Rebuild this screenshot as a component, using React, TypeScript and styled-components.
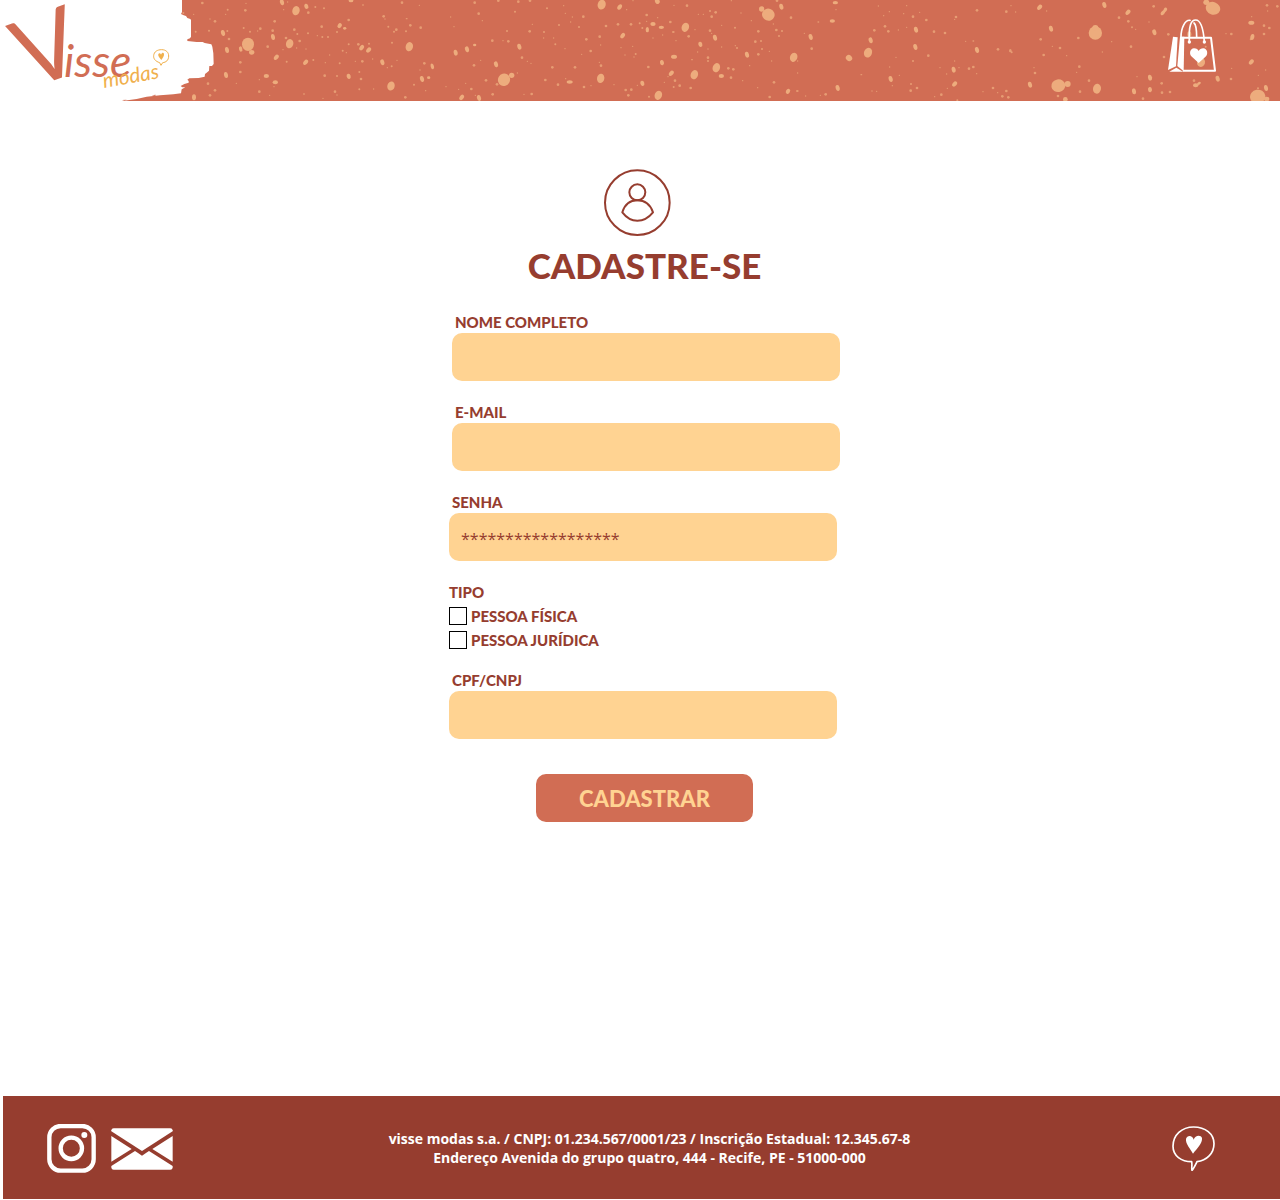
import React from "react";
import styled, { createGlobalStyle } from "styled-components";

const color = {
  coral: "#d16d54",
  speck: "#edac7d",
  brick: "#963d2f",
  cream: "#ffd392",
  gold: "#f0b04c",
  white: "#ffffff",
};

const GlobalStyle = createGlobalStyle`
  *, *::before, *::after { box-sizing: border-box; }
  body {
    margin: 0;
    background: ${color.white};
    color: ${color.brick};
    font-family: Lato, "Open Sans", sans-serif;
  }
`;

const Page = styled.div`
  display: flex;
  flex-direction: column;
  min-height: 100vh;
  padding-bottom: 1px;
`;

const Header = styled.header`
  position: relative;
  display: flex;
  justify-content: space-between;
  align-items: flex-start;
  padding-right: 64px;
  overflow: hidden;
  background: ${color.coral};
`;

const Speckles = styled.svg`
  position: absolute;
  inset: 0;
  width: 100%;
  height: 100%;
  fill: ${color.speck};
`;

const LogoLink = styled.a`
  position: relative;
  display: block;
  line-height: 0;
`;

const BagLink = styled.a`
  position: relative;
  display: block;
  margin-top: 19px;
  line-height: 0;
`;

const Main = styled.main`
  flex: 1;
  display: flex;
  flex-direction: column;
  align-items: center;
  padding: 68px 0 48px 9px;
`;

const Avatar = styled.svg`
  margin-right: 14px;
  fill: none;
  stroke: ${color.brick};
  stroke-width: 6;
`;

const Title = styled.h1`
  margin: 5px 0 22px;
  font-size: 35px;
  line-height: 48px;
  font-weight: 900;
  text-transform: uppercase;
`;

const Form = styled.form`
  display: flex;
  flex-direction: column;
  gap: 20px;
  width: 391px;
  max-width: 100%;
`;

const Field = styled.div<{ $side: "start" | "end" }>`
  display: flex;
  flex-direction: column;
  align-self: flex-${(p) => p.$side};
  width: 388px;
  max-width: 100%;
`;

const Label = styled.label`
  padding-left: 3px;
  font-size: 15px;
  line-height: 22px;
  font-weight: 900;
  text-transform: uppercase;
`;

const TextBox = styled.input`
  width: 100%;
  height: 48px;
  padding: 4px 12px 0;
  border: 0;
  border-radius: 10px;
  background: ${color.cream};
  color: ${color.brick};
  font-family: "Open Sans", sans-serif;
  font-size: 16px;
`;

const Group = styled.fieldset`
  display: flex;
  flex-direction: column;
  min-width: 0;
  margin: 0;
  padding: 0;
  border: 0;
`;

const Legend = styled.legend`
  padding: 0;
  font-size: 15px;
  line-height: 22px;
  font-weight: 900;
  text-transform: uppercase;
`;

const Options = styled.div`
  display: flex;
  flex-direction: column;
  gap: 6px;
  padding-top: 4px;
`;

const Option = styled.label`
  display: flex;
  align-items: center;
  gap: 4px;
  font-size: 15px;
  line-height: 18px;
  font-weight: 900;
  text-transform: uppercase;
`;

const Tick = styled.input`
  appearance: none;
  width: 18px;
  height: 18px;
  margin: 0;
  border: 1px solid #000;
  background: ${color.white};
  &:checked { background: ${color.coral}; }
`;

const Submit = styled.button`
  align-self: center;
  width: 217px;
  height: 48px;
  margin-top: 15px;
  padding: 0;
  border: 0;
  border-radius: 10px;
  background: ${color.coral};
  color: ${color.cream};
  font-family: inherit;
  font-size: 22px;
  font-weight: 900;
  text-transform: uppercase;
  cursor: pointer;
`;

const Footer = styled.footer`
  display: grid;
  grid-template-columns: 1fr auto 1fr;
  align-items: center;
  min-height: 103px;
  margin-left: 3px;
  background: ${color.brick};
  color: ${color.white};
`;

const Social = styled.nav`
  display: flex;
  align-items: center;
  gap: 15px;
  padding: 2px 0 0 44px;
  line-height: 0;
`;

const Company = styled.p`
  margin: 0;
  padding-left: 16px;
  font-family: "Open Sans", sans-serif;
  font-size: 14px;
  line-height: 19px;
  font-weight: 700;
  text-align: center;
`;

const ChatLink = styled.a`
  justify-self: end;
  padding: 2px 65px 0 0;
  line-height: 0;
`;

/* Each speck is x, y, horizontal radius, vertical radius, tilt, in banner units of a third of a pixel. */
type Speck = [number, number, number, number?, number?];

const SPECKS: { origin: number; marks: Speck[] }[] = [
  { origin: 0, marks: [[550, 39, 3], [587, 95, 3], [582, 292, 6, 9], [581, 43, 2]] },
  {
    origin: 600,
    marks: [
      [144, 133, 18, 20], [155, 157, 8, 7], [288, 32, 11, 14, 15], [269, 131, 11, 14, 15], [628, 140, 11, 14, 15],
      [573, 258, 11, 14, 15], [912, 239, 18, 19, 30], [935, 226, 8, 8],
      [246, 7, 6, 9, -15], [319, 19, 6, 8, -20], [69, 99, 6, 9, -15], [81, 150, 6, 9, -10], [122, 147, 5, 8, -15],
      [219, 111, 6, 9, -10], [229, 172, 6, 9, 40], [317, 187, 6, 9, 40], [199, 228, 8, 6], [226, 247, 8, 6],
      [78, 225, 6, 9, -10], [419, 77, 6, 8, 35], [485, 143, 6, 9, 35], [506, 150, 6, 9, 40], [446, 229, 6, 8, -15],
      [547, 187, 6, 9, -15], [697, 199, 5, 9, -15], [666, 237, 6, 9, -15], [767, 158, 6, 9, -10], [801, 148, 6, 9, -15],
      [958, 140, 6, 9, -15], [888, 193, 6, 9, -15], [785, 292, 6, 9, 35], [837, 294, 6, 9, -15],
      [453, 2, 7, 5], [7, 9, 4], [83, 29, 3], [45, 64, 4], [27, 92, 3], [82, 93, 3], [87, 117, 4], [77, 43, 2], [30, 57, 2],
      [136, 31, 4], [138, 10, 2], [263, 6, 2], [346, 21, 3], [372, 25, 3], [325, 38, 4], [251, 29, 2], [224, 64, 4],
      [131, 84, 3], [150, 95, 3], [181, 86, 4], [173, 93, 2], [218, 92, 4], [283, 89, 4], [292, 102, 3], [324, 100, 3],
      [258, 114, 4], [299, 123, 4], [203, 140, 4], [249, 149, 2], [290, 144, 2], [318, 147, 2], [352, 107, 2],
      [367, 111, 3], [384, 111, 3], [365, 80, 4], [411, 96, 3], [434, 85, 5, 4], [446, 60, 4], [489, 15, 3, 2],
      [551, 49, 4], [555, 57, 2], [606, 8, 4], [620, 56, 3, 2], [658, 16, 2], [565, 80, 3], [589, 89, 4], [582, 95, 3],
      [618, 94, 3], [631, 76, 4], [662, 83, 4], [576, 128, 3], [507, 131, 3], [475, 133, 4], [446, 133, 3], [428, 152, 3],
      [439, 158, 2], [389, 165, 2], [376, 188, 2], [340, 180, 3], [260, 185, 3], [121, 187, 4], [121, 216, 4],
      [24, 251, 4], [45, 271, 4], [30, 286, 4], [109, 250, 2], [178, 239, 2], [178, 275, 4], [209, 286, 2], [222, 260, 2],
      [312, 282, 3, 2], [374, 227, 4], [411, 228, 3], [419, 190, 3], [466, 184, 2], [487, 184, 4], [518, 177, 2],
      [591, 181, 2], [562, 203, 2], [575, 199, 3], [478, 216, 3], [483, 237, 4], [478, 268, 3], [405, 275, 4], [411, 285, 2],
      [369, 295, 2], [521, 267, 2], [616, 292, 4], [642, 254, 3], [686, 233, 5, 4], [660, 210, 2], [673, 190, 4],
      [677, 272, 2], [738, 260, 2], [752, 51, 2], [762, 80, 2], [824, 8, 4], [836, 41, 4], [847, 62, 2], [895, 2, 4],
      [955, 5, 4], [945, 35, 3], [990, 2, 4], [1041, 25, 3], [997, 73, 2], [989, 94, 4], [921, 93, 3], [877, 122, 4],
      [909, 122, 2], [925, 124, 4], [824, 135, 5, 4], [822, 196, 4], [842, 181, 2], [966, 173, 4], [982, 184, 2],
      [993, 190, 2], [952, 219, 2], [858, 241, 4], [891, 253, 4], [797, 250, 2], [814, 267, 4], [776, 268, 2],
      [826, 286, 2], [878, 283, 4], [972, 283, 2], [995, 282, 4], [1036, 240, 4], [1032, 96, 3], [1031, 114, 2],
    ],
  },
  {
    origin: 1650,
    marks: [
      [155, 14, 12, 15, 15], [406, 82, 11, 14, 20], [152, 235, 11, 14, 10], [433, 224, 11, 14, 20], [499, 203, 11, 14, 20],
      [325, 286, 11, 14, 20], [655, 44, 19, 18, 20], [635, 27, 8, 8], [731, 172, 11, 14, 20], [897, 174, 10, 9, 45],
      [954, 158, 12, 15, 20], [322, 4, 7, 8, -30],
      [209, 21, 6, 9, 35], [218, 107, 6, 9, 35], [309, 72, 8, 6], [334, 82, 8, 5], [292, 89, 5, 8], [372, 170, 9, 6],
      [336, 188, 6, 8, -15], [364, 220, 6, 9, 40], [277, 250, 6, 8, -15], [59, 246, 9, 5], [451, 133, 6, 8, -15],
      [495, 113, 6, 9, -15], [591, 164, 6, 9, -15], [514, 228, 8, 6], [694, 20, 6, 9, -15], [782, 111, 6, 9, -15],
      [847, 63, 8, 5], [856, 8, 8, 5], [962, 121, 6, 9, -15], [1022, 237, 6, 9, -15], [863, 264, 6, 9, -15],
      [714, 274, 6, 8, 30],
      [41, 17, 2], [46, 40, 2], [67, 51, 2], [62, 66, 2], [27, 75, 3], [100, 50, 4], [87, 81, 3], [168, 78, 4],
      [204, 73, 4], [243, 73, 4], [230, 29, 2], [249, 2, 2], [290, 45, 4], [290, 64, 2], [269, 70, 3], [277, 84, 3],
      [323, 53, 2], [361, 66, 4], [372, 16, 2], [411, 17, 4], [370, 96, 4, 3], [338, 105, 2], [309, 114, 2], [378, 122, 2],
      [416, 109, 4], [435, 89, 2], [445, 43, 2], [460, 43, 2], [480, 33, 3], [497, 37, 4], [485, 50, 4], [515, 76, 2],
      [480, 92, 4], [485, 100, 2], [544, 2, 2], [573, 39, 2], [555, 83, 3], [604, 62, 2], [625, 94, 4], [616, 125, 4],
      [633, 123, 3], [636, 147, 3], [625, 163, 4], [658, 154, 2], [665, 183, 2], [670, 72, 2], [679, 90, 4], [696, 93, 3],
      [687, 108, 3], [681, 2, 4], [723, 53, 4], [763, 100, 2], [785, 146, 4], [805, 66, 3, 2], [858, 29, 2],
      [11, 114, 2], [16, 133, 3], [45, 146, 2], [109, 118, 4], [149, 110, 4], [152, 135, 2], [122, 153, 4], [95, 163, 2],
      [213, 143, 2], [248, 139, 2], [225, 165, 2], [257, 162, 3], [252, 171, 2], [148, 187, 2], [153, 197, 4],
      [75, 202, 4], [7, 202, 4], [24, 254, 4], [47, 236, 2], [102, 261, 4], [123, 257, 2], [192, 254, 2], [227, 270, 4],
      [244, 269, 4], [235, 286, 4], [262, 256, 2], [297, 290, 3], [295, 201, 4], [354, 230, 2], [343, 247, 2],
      [375, 242, 4], [371, 261, 3], [389, 257, 4], [422, 264, 4], [426, 179, 3, 2], [443, 156, 2], [474, 147, 2],
      [474, 173, 4], [474, 183, 3], [515, 141, 2], [556, 137, 2], [561, 144, 3], [535, 205, 4], [550, 208, 4],
      [543, 233, 4], [599, 197, 2], [578, 242, 2], [623, 263, 2], [672, 247, 4], [659, 291, 4], [743, 183, 2],
      [743, 219, 2], [742, 273, 4, 3], [767, 288, 2], [811, 286, 2], [827, 283, 4], [934, 224, 3, 2], [966, 273, 2],
      [980, 274, 2], [1027, 257, 2], [1048, 226, 2], [1019, 201, 2], [1038, 172, 2], [1015, 94, 4], [1005, 79, 4],
      [973, 91, 4], [985, 18, 2], [1001, 47, 2], [1018, 35, 2], [1045, 90, 2],
    ],
  },
  {
    origin: 2700,
    marks: [
      [586, 99, 20, 20], [586, 84, 9, 9], [475, 257, 21, 19, -10], [503, 252, 9, 9], [591, 266, 12, 15, 10],
      [939, 25, 22, 19, 20], [919, 7, 9, 8], [1073, 290, 23, 21, -10], [1100, 297, 8, 7], [903, 187, 12, 14, 15],
      [868, 103, 6, 9], [48, 89, 6, 9, -15], [46, 141, 6, 9, -15], [161, 209, 6, 9, -10], [164, 252, 6, 9, 40],
      [231, 150, 6, 9, -15], [419, 22, 6, 9, 40], [453, 86, 6, 9, -15], [390, 254, 6, 9, -15], [613, 15, 6, 9, -15],
      [684, 37, 6, 9, 40], [763, 97, 6, 9, -15], [789, 38, 5, 9, 40], [796, 29, 5, 7, 30], [750, 233, 6, 9, -10],
      [750, 269, 6, 8, -10], [702, 274, 6, 9, -10], [953, 236, 6, 9, -15], [887, 256, 8, 6], [897, 250, 6, 4, -30],
      [1054, 186, 6, 9, 40], [1057, 111, 6, 9, 10], [1054, 68, 9, 6], [1098, 264, 6, 9, -10], [496, 298, 7, 7],
      [20, 17, 2], [11, 41, 2], [39, 50, 4], [59, 37, 2], [79, 60, 4], [20, 82, 2], [102, 95, 4], [135, 99, 4],
      [168, 51, 4], [164, 58, 2], [231, 31, 4], [197, 124, 2], [220, 123, 3, 2], [333, 17, 2], [319, 35, 4],
      [347, 36, 2], [440, 33, 2], [422, 118, 4], [457, 139, 2], [480, 144, 4], [431, 165, 4], [500, 167, 2],
      [535, 114, 4], [538, 200, 4], [530, 217, 2], [607, 156, 2], [635, 125, 2], [693, 140, 4], [657, 53, 4],
      [685, 64, 4], [696, 82, 3], [707, 88, 2], [747, 66, 2], [761, 19, 4], [805, 103, 4], [792, 171, 4],
      [85, 167, 4], [39, 183, 3], [33, 252, 3], [32, 272, 4], [51, 264, 4], [104, 290, 2], [124, 284, 4],
      [120, 203, 2], [140, 222, 2], [142, 265, 2], [164, 183, 2], [177, 203, 2], [207, 206, 4], [220, 201, 4],
      [230, 221, 2], [249, 275, 2], [279, 264, 4], [293, 278, 2], [307, 289, 4], [325, 292, 4], [319, 273, 4],
      [294, 148, 4], [331, 152, 4, 5], [335, 157, 3], [402, 203, 2], [405, 219, 4], [567, 242, 4], [540, 275, 4],
      [474, 288, 4], [711, 230, 2], [729, 296, 4], [785, 250, 4], [786, 278, 4], [810, 276, 4], [882, 242, 4],
      [993, 237, 4], [995, 205, 2], [978, 101, 2], [994, 102, 4], [1055, 50, 2], [1052, 118, 3], [1092, 77, 4],
      [1108, 84, 4], [1092, 102, 4], [1101, 16, 4], [1132, 19, 4], [1103, 33, 2], [1097, 210, 2], [1075, 226, 2],
      [1074, 265, 3], [917, 140, 3], [172, 301, 3],
    ],
  },
];

function Splatter() {
  return (
    <Speckles viewBox="0 0 3840 303" preserveAspectRatio="xMidYMin slice" aria-hidden="true">
      {SPECKS.map(({ origin, marks }) => (
        <g key={origin} transform={`translate(${origin} 0)`}>
          {marks.map(([x, y, rx, ry = rx, tilt = 0], i) => (
            <ellipse
              key={i}
              cx={x}
              cy={y}
              rx={rx}
              ry={ry}
              opacity={rx < 5 ? 0.75 : 1}
              transform={`rotate(${tilt} ${x} ${y})`}
            />
          ))}
        </g>
      ))}
    </Speckles>
  );
}

function Logo() {
  return (
    <svg width="214" height="101" viewBox="0 0 642 303" role="img" aria-label="Visse modas">
      <path
        fill={color.white}
        d="M0 0H546V36L543 42 551 46 558 48 562 54 571 57 573 60V110L570 115 562 118V123L590 126 608 126 614 129 634 133 637 140 640 160 641 192 636 198 628 198 627 212 620 218 615 222 614 230 596 234 568 235 562 239 566 243V248L553 252 542 258 547 262 556 262 545 268 543 280 520 283 480 286 440 290 410 297 366 303H0Z"
      />
      <path fill={color.coral} d="M455 286l12-2-1 4zM366 300l14-1-6 3z" />
      <g fontFamily="Lato, sans-serif">
        <text x="174" y="236" fill={color.coral} fontSize="284" textAnchor="middle" transform="rotate(-20 174 236)">V</text>
        <text x="192" y="232" fill={color.coral} fontSize="134" fontStyle="italic">isse</text>
        <text x="312" y="264" fill={color.gold} fontSize="62" fontStyle="italic" transform="rotate(-10 312 264)">modas</text>
      </g>
      <path
        fill="none"
        stroke={color.gold}
        strokeWidth="3"
        d="M479 188C466 184 460 176 461 167C462 155 472 149 485 149C498 149 506 157 506 168C506 181 498 187 488 188L483 196Z"
      />
      <path fill={color.gold} d="M484 180C478 173 473 167 475 162C478 158 482 160 483 164C486 157 491 157 492 162C493 168 488 174 484 180Z" />
    </svg>
  );
}

function BagIcon() {
  return (
    <svg width="48" height="53" viewBox="54 43 144 159" aria-hidden="true">
      <g fill="none" stroke={color.white} strokeWidth="5" strokeLinecap="round">
        <path d="M93 98C93 68 106 45 120 47" />
        <path d="M118 111C116 62 123 46 137 46C152 46 160 72 163 111" />
        <path d="M132 55C138 60 140 78 140 97" />
      </g>
      <path fill="none" stroke={color.white} strokeWidth="6" strokeLinejoin="round" d="M94 99H183L195 198H98" />
      <g fill={color.white}>
        <path d="M69 96L83 98 78 185 54 196Z" />
        <path d="M90 96H103L101 198 94 194 82 184Z" />
        <path d="M58 201L79 189 99 201Z" />
        <circle cx="118" cy="112" r="5" />
        <circle cx="163" cy="112" r="5" />
        <path d="M146 175L124 155C117 147 120 132 132 131C140 131 144 135 146 139C149 134 153 131 160 131C172 132 175 147 168 155Z" />
      </g>
    </svg>
  );
}

function UserIcon() {
  return (
    <Avatar width="67" height="67" viewBox="492 27 201 201" aria-hidden="true">
      <circle cx="592" cy="128" r="97" />
      <circle cx="592" cy="97" r="24" />
      <path strokeLinejoin="round" d="M547 157C554 134 571 121 592 121C613 121 631 134 639 157Q619 182 592 182Q566 182 547 157Z" />
    </Avatar>
  );
}

function InstagramIcon() {
  return (
    <svg width="49" height="49" viewBox="140 117 147 147" fill="none" stroke={color.white} aria-hidden="true">
      <rect x="147" y="123" width="133" height="134" rx="34" strokeWidth="13" />
      <circle cx="213" cy="190" r="32" strokeWidth="13" />
      <circle cx="252" cy="150" r="9" fill={color.white} stroke="none" />
    </svg>
  );
}

function MailIcon() {
  return (
    <svg width="62" height="42" viewBox="332 131 186 126" fill={color.white} aria-hidden="true">
      <path d="M333 141V138Q334 132 340 132H510Q516 132 517 138V141L425 200Z" />
      <path d="M333 155L394 194 333 232ZM517 155L456 194 517 232Z" />
      <path d="M333 245L404 200 412 205 425 214 438 205 446 200 517 245V250Q516 256 510 256H340Q334 256 333 250Z" />
    </svg>
  );
}

function ChatHeartIcon() {
  return (
    <svg width="43" height="45" viewBox="66 123 129 135" aria-hidden="true">
      <path
        fill="none"
        stroke={color.white}
        strokeWidth="5"
        strokeLinejoin="round"
        d="M125 230C94 230 69 213 69 184C69 150 95 126 131 126C166 126 192 147 192 176C192 205 170 227 141 230C137 238 132 249 126 256C124 249 127 239 125 230Z"
      />
      <path fill={color.white} d="M129 206C122 193 106 176 108 162C111 149 128 150 131 164C135 150 153 149 156 159C158 175 140 192 129 206Z" />
    </svg>
  );
}

type TextFieldProps = { id: string; label: string; type?: string; value?: string; side?: "start" | "end" };

function TextField({ id, label, type = "text", value, side = "start" }: TextFieldProps) {
  return (
    <Field $side={side}>
      <Label htmlFor={id}>{label}</Label>
      <TextBox id={id} name={id} type={type} defaultValue={value} />
    </Field>
  );
}

export default function App() {
  return (
    <>
      <GlobalStyle />
      <Page>
        <Header>
          <Splatter />
          <LogoLink href="#inicio"><Logo /></LogoLink>
          <BagLink href="#sacola" aria-label="Sacola"><BagIcon /></BagLink>
        </Header>
        <Main>
          <UserIcon />
          <Title>Cadastre-se</Title>
          <Form onSubmit={(e) => e.preventDefault()}>
            <TextField id="nome" label="Nome completo" side="end" />
            <TextField id="email" label="E-mail" type="email" side="end" />
            <TextField id="senha" label="Senha" value="******************" />
            <Group>
              <Legend>Tipo</Legend>
              <Options>
                <Option><Tick type="checkbox" name="fisica" />Pessoa física</Option>
                <Option><Tick type="checkbox" name="juridica" />Pessoa jurídica</Option>
              </Options>
            </Group>
            <TextField id="documento" label="CPF/CNPJ" />
            <Submit type="submit">Cadastrar</Submit>
          </Form>
        </Main>
        <Footer>
          <Social>
            <a href="#instagram" aria-label="Instagram"><InstagramIcon /></a>
            <a href="#email" aria-label="E-mail"><MailIcon /></a>
          </Social>
          <Company>
            visse modas s.a. / CNPJ: 01.234.567/0001/23 / Inscrição Estadual: 12.345.67-8
            <br />
            Endereço Avenida do grupo quatro, 444 - Recife, PE - 51000-000
          </Company>
          <ChatLink href="#contato" aria-label="Contato"><ChatHeartIcon /></ChatLink>
        </Footer>
      </Page>
    </>
  );
}
